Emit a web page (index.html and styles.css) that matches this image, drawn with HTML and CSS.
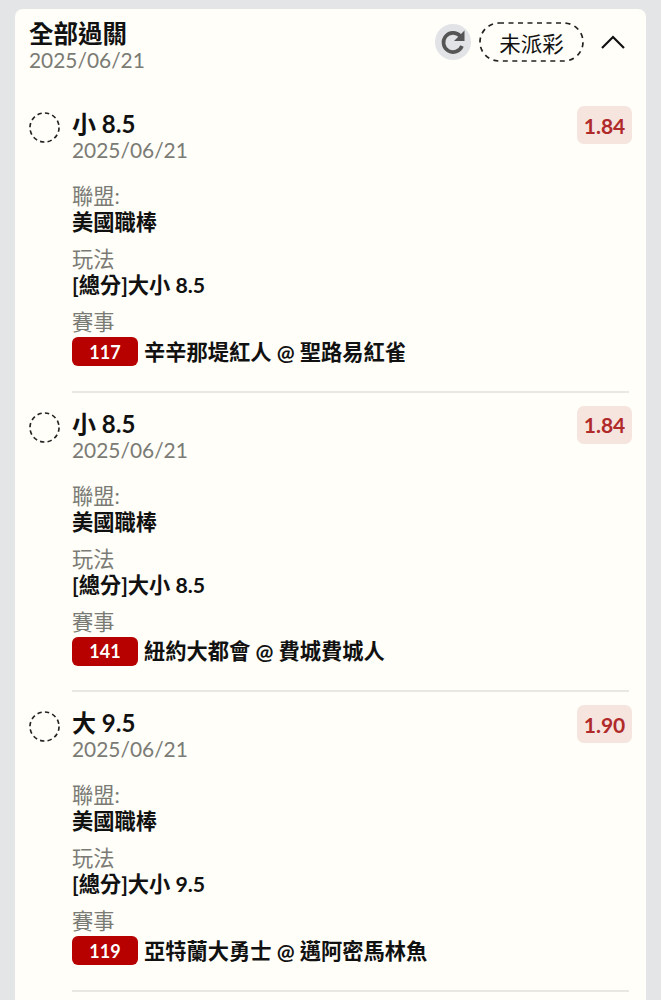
FILE: index.html
```html
<!DOCTYPE html>
<html lang="zh-Hant">
<head>
<meta charset="utf-8">
<title>全部過關</title>
<link rel="stylesheet" href="styles.css">
</head>
<body>
<main class="card">
  <header class="card-head">
    <div class="head-text">
      <h1 class="head-title">全部過關</h1>
      <div class="date">2025/06/21</div>
    </div>
    <div class="head-actions">
      <button class="refresh" aria-label="重新整理">
        <svg viewBox="0 0 36 36" width="36" height="36"><path d="M27 22a9.6 9.6 0 1 1-1.8-10" fill="none" stroke="#555" stroke-width="3.6"/><path d="M29.5 6.5v10.6H19z" fill="#555"/></svg>
      </button>
      <span class="status">
        <svg class="status-ring" viewBox="0 0 105 40" width="105" height="40"><rect x="1" y="1" width="103" height="38" rx="19" fill="none" stroke="#222" stroke-width="1.7" stroke-dasharray="5 4.5"/></svg>
        未派彩
      </span>
      <svg class="chevron" viewBox="0 0 26 16" width="26" height="16"><path d="M2 14 13 3l11 11" fill="none" stroke="#111" stroke-width="2.2"/></svg>
    </div>
  </header>

  <section class="bet">
    <svg class="bet-mark" viewBox="0 0 32 32" width="31" height="31"><circle cx="16" cy="16" r="15" fill="none" stroke="#222" stroke-width="1.7" stroke-dasharray="4.5 3.35"/></svg>
    <div class="bet-body">
      <div class="bet-top">
        <div>
          <div class="bet-title">小 8.5</div>
          <div class="date">2025/06/21</div>
        </div>
        <span class="odds">1.84</span>
      </div>
      <div class="field"><div class="field-label">聯盟:</div><div class="field-value">美國職棒</div></div>
      <div class="field"><div class="field-label">玩法</div><div class="field-value">[總分]大小 8.5</div></div>
      <div class="field"><div class="field-label">賽事</div><div class="field-value game"><span class="game-no">117</span>辛辛那堤紅人 @ 聖路易紅雀</div></div>
    </div>
  </section>

  <section class="bet">
    <svg class="bet-mark" viewBox="0 0 32 32" width="31" height="31"><circle cx="16" cy="16" r="15" fill="none" stroke="#222" stroke-width="1.7" stroke-dasharray="4.5 3.35"/></svg>
    <div class="bet-body">
      <div class="bet-top">
        <div>
          <div class="bet-title">小 8.5</div>
          <div class="date">2025/06/21</div>
        </div>
        <span class="odds">1.84</span>
      </div>
      <div class="field"><div class="field-label">聯盟:</div><div class="field-value">美國職棒</div></div>
      <div class="field"><div class="field-label">玩法</div><div class="field-value">[總分]大小 8.5</div></div>
      <div class="field"><div class="field-label">賽事</div><div class="field-value game"><span class="game-no">141</span>紐約大都會 @ 費城費城人</div></div>
    </div>
  </section>

  <section class="bet">
    <svg class="bet-mark" viewBox="0 0 32 32" width="31" height="31"><circle cx="16" cy="16" r="15" fill="none" stroke="#222" stroke-width="1.7" stroke-dasharray="4.5 3.35"/></svg>
    <div class="bet-body">
      <div class="bet-top">
        <div>
          <div class="bet-title">大 9.5</div>
          <div class="date">2025/06/21</div>
        </div>
        <span class="odds">1.90</span>
      </div>
      <div class="field"><div class="field-label">聯盟:</div><div class="field-value">美國職棒</div></div>
      <div class="field"><div class="field-label">玩法</div><div class="field-value">[總分]大小 9.5</div></div>
      <div class="field"><div class="field-label">賽事</div><div class="field-value game"><span class="game-no">119</span>亞特蘭大勇士 @ 邁阿密馬林魚</div></div>
    </div>
  </section>
</main>
</body>
</html>
```
FILE: styles.css
```css
* { box-sizing: border-box; }

html, body { height: 1000px; overflow: hidden; }

body {
  margin: 0;
  padding: 9px 15px 0;
  background: #e3e5e7;
  font-family: Lato, "Noto Sans CJK TC", sans-serif;
  color: #111;
}

.card {
  background: #fffef8;
  border-radius: 8px 8px 0 0;
  padding: 12px 17px 0 14px;
  height: 991px;
  overflow: hidden;
}

.card-head {
  display: flex;
  justify-content: space-between;
  align-items: flex-start;
  height: 72px;
}

.head-title {
  margin: 0;
  font-size: 24.5px;
  line-height: 26px;
  font-weight: 700;
}

.date {
  font-size: 20.9px;
  line-height: 26px;
  color: #7b7b76;
}

.head-actions {
  display: flex;
  align-items: center;
  gap: 8px;
  margin-top: 1px;
  padding-right: 3px;
}

.refresh {
  width: 36px;
  height: 36px;
  padding: 0;
  border: 0;
  border-radius: 50%;
  background: #e1e3e6;
  display: block;
}

.status {
  position: relative;
  width: 105px;
  height: 40px;
  display: flex;
  align-items: center;
  justify-content: center;
  font-size: 21.5px;
}

/* dashed outline drawn over the pill so the dash length can be tuned */
.status-ring {
  position: absolute;
  inset: 0;
}

.chevron { margin-left: 8px; }

.bet {
  display: flex;
  align-items: flex-start;
  height: 299.5px;
}

.bet-mark {
  margin: 19px 12px 0 0;
  flex: none;
}

.bet-body {
  flex: 1;
  height: 100%;
  padding-top: 12px;
  border-bottom: 2px solid #e9e8e2;
}

.bet-top {
  display: flex;
  justify-content: space-between;
  align-items: flex-start;
  margin-bottom: 20px;
}

.bet-title {
  font-size: 24px;
  line-height: 26px;
  font-weight: 700;
  margin-top: 6px;
}

.odds {
  width: 55px;
  height: 38px;
  margin: 1px -3px 0 0;
  border-radius: 7px;
  background: #f6e4df;
  color: #b02a2a;
  font-size: 21px;
  font-weight: 700;
  display: flex;
  align-items: center;
  justify-content: center;
}

.field { margin-bottom: 11px; }

.field-label {
  font-size: 21.25px;
  line-height: 26px;
  color: #7b7b76;
}

.field-value {
  font-size: 21.25px;
  line-height: 26px;
  font-weight: 700;
}

.game {
  display: flex;
  align-items: center;
  gap: 6px;
  margin-top: 2px;
}

.game-no {
  width: 66px;
  height: 29px;
  border-radius: 6px;
  background: #b70000;
  color: #fff;
  font-size: 18px;
  font-weight: 700;
  display: flex;
  align-items: center;
  justify-content: center;
}
```
